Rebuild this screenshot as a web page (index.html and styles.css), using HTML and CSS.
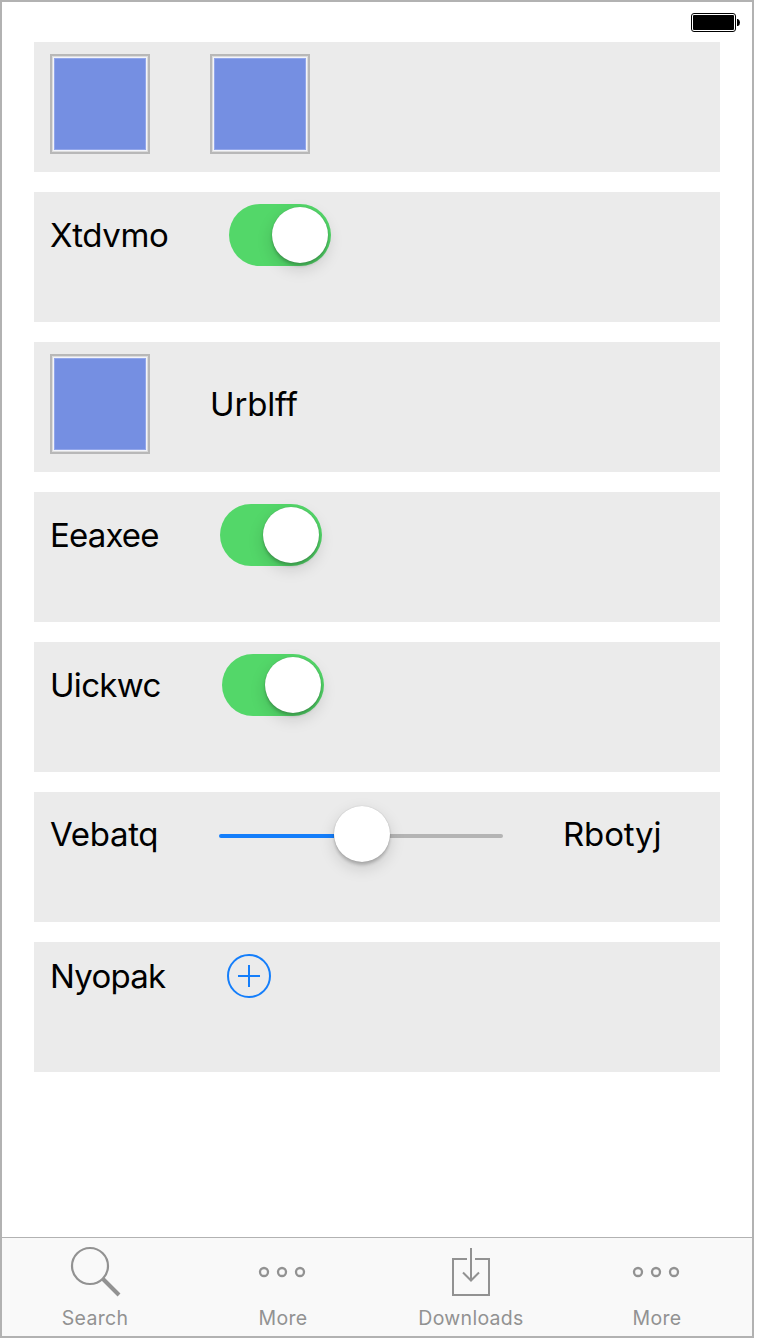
FILE: index.html
```html
<!DOCTYPE html>
<html lang="en">
<head>
<meta charset="utf-8">
<title>Controls</title>
<link rel="stylesheet" href="styles.css">
</head>
<body>
<div class="phone">
  <header class="status">
    <svg width="50" height="20" viewBox="0 0 50 20">
      <rect x="1.5" y="1.500" width="44" height="18" rx="2.5" fill="none" stroke="#000"/>
      <rect x="3" y="3" width="41" height="15" rx="1" fill="#000"/>
      <path d="M47 7h1q2 1 2 3.500t-2 3.500h-1z" fill="#000"/>
    </svg>
  </header>
  <main class="rows">
    <section class="row"><div class="swatch"></div><div class="swatch"></div></section>
    <section class="row"><span class="label l-xt">Xtdvmo</span><div class="switch"><i class="knob"></i></div></section>
    <section class="row"><div class="swatch"></div><span class="label tall l-ur">Urblff</span></section>
    <section class="row"><span class="label l-ee">Eeaxee</span><div class="switch"><i class="knob"></i></div></section>
    <section class="row"><span class="label l-ui">Uickwc</span><div class="switch"><i class="knob"></i></div></section>
    <section class="row"><span class="label slide l-ve">Vebatq</span><div class="slider"><i class="fill"></i><i class="knob"></i><i class="rest"></i></div><span class="label slide l-rb">Rbotyj</span></section>
    <section class="row"><span class="label short l-ny">Nyopak</span>
      <svg width="44" height="44" viewBox="0 0 44 44" fill="none" stroke="#147efb" stroke-width="2"><circle cx="22" cy="22" r="21"/><path d="M22 11v22M11 22h22"/></svg>
    </section>
  </main>
  <nav class="tabs">
    <a class="tab"><svg width="60" height="56" viewBox="0 0 60 56" fill="none" stroke="#929292"><circle cx="25" cy="28" r="18" stroke-width="2.200"/><path d="M38 41l16 16" stroke-width="4"/></svg><span>Search</span></a>
    <a class="tab"><svg width="60" height="56" viewBox="0 0 60 56" fill="none" stroke="#929292" stroke-width="2.300"><circle cx="11" cy="34" r="4"/><circle cx="29" cy="34" r="4"/><circle cx="47" cy="34" r="4"/></svg><span>More</span></a>
    <a class="tab"><svg width="60" height="56" viewBox="0 0 60 56" fill="none" stroke="#929292" stroke-width="2"><path d="M26 21H12v36h36V21H34M30 10v33M22 34.500l8 8 8-8"/></svg><span>Downloads</span></a>
    <a class="tab"><svg width="60" height="56" viewBox="0 0 60 56" fill="none" stroke="#929292" stroke-width="2.300"><circle cx="11" cy="34" r="4"/><circle cx="29" cy="34" r="4"/><circle cx="47" cy="34" r="4"/></svg><span>More</span></a>
  </nav>
</div>
</body>
</html>
```
FILE: styles.css
```css
* { box-sizing: border-box; }
body { margin: 0; background: #fff; font-family: Inter, "Liberation Sans", sans-serif; }
.phone { width: 754px; height: 1338px; border: 2px solid #b2b2b2; display: flex; flex-direction: column; }
.status { height: 40px; padding: 10px 12px 0 0; display: flex; justify-content: flex-end; align-items: flex-start; }
.rows { flex: 1; padding: 0 32px; display: flex; flex-direction: column; gap: 20px; }
.row { height: 130px; padding: 12px 16px; background: #ebebeb; display: flex; align-items: flex-start; gap: 60px; }
.swatch { width: 100px; height: 100px; border: 2px solid #b8b8b8; background: #758fe2; box-shadow: inset 0 0 0 1px #dcdcdc, inset 0 0 0 2px #f3f4fa, inset 0 0 0 3px #92a6ea; }
.label { font-size: 33px; line-height: 62px; height: 62px; white-space: nowrap; color: #000; font-variant-ligatures: none; font-feature-settings: "calt" 0; }
.tall { line-height: 100px; height: 100px; }
.slide { line-height: 60px; height: 60px; }
.short { line-height: 44px; height: 44px; }
.l-xt { width: 119px; letter-spacing: -.35px; }
.l-ur { letter-spacing: -.15px; }
.l-ee { width: 110px; letter-spacing: -.85px; }
.l-ui { width: 112px; letter-spacing: -.7px; }
.l-ve { width: 109px; letter-spacing: -.3px; }
.l-rb { letter-spacing: -.15px; }
.l-ny { width: 117px; letter-spacing: -.75px; }
.switch { width: 102px; height: 62px; border-radius: 31px; background: #53d769; padding: 3px; display: flex; justify-content: flex-end; }
.knob { width: 56px; height: 56px; border-radius: 50%; background: #fff; flex: none; box-shadow: 0 6px 16px rgba(0,0,0,.15), 0 3px 3px rgba(0,0,0,.18), 0 0 1px rgba(0,0,0,.25); }
.slider { width: 284px; height: 60px; display: flex; align-items: center; }
.slider .knob { z-index: 1; }
.fill, .rest { height: 4px; position: relative; top: 2px; }
.fill { width: 115px; background: #147efb; border-radius: 2px 0 0 2px; }
.rest { flex: 1; background: #b4b4b4; border-radius: 0 2px 2px 0; }
.tabs { height: 99px; border-top: 1px solid #b2b2b2; background: #f9f9f9; display: grid; grid-template-columns: 186px 190px 186px 186px; }
.tab { display: flex; flex-direction: column; align-items: center; color: #929292; font-size: 19.5px; }
.tab svg { overflow: visible; }
.tab span { line-height: 24px; margin-top: 12px; white-space: nowrap; letter-spacing: .3px; }
```
